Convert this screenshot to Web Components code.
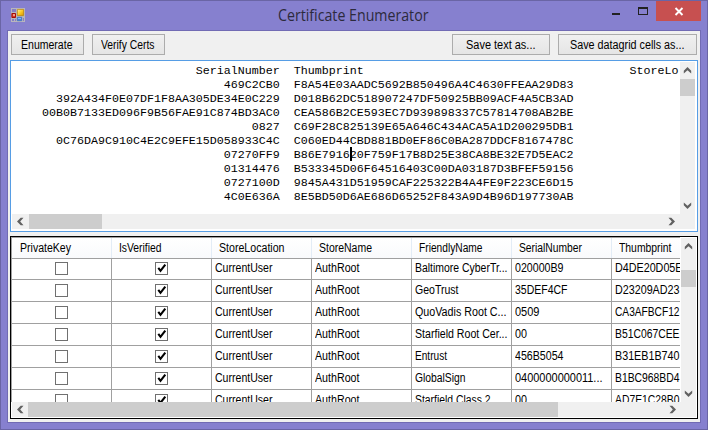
<!DOCTYPE html>
<html lang="en">
<head>
<meta charset="utf-8">
<title>Certificate Enumerator</title>
<style>
html,body{margin:0;padding:0;overflow:hidden}
body{width:708px;height:430px;font-family:"Liberation Sans",Arial,sans-serif;font-size:12px;color:#000}
</style>
</head>
<body>
<app-window></app-window>
<script>
const define = (name, html, setup) => customElements.define(name, class extends HTMLElement {
  connectedCallback() {
    if (this.shadowRoot) return;
    const root = this.attachShadow({mode: 'open'});
    root.innerHTML = typeof html === 'function' ? html(this) : html;
    if (setup) setup(this, root);
  }
});

/* Text condensed horizontally to the width given by the w attribute. */
define('fit-text', el => `<style>
:host{display:block;width:${el.getAttribute('w')}px;white-space:pre;flex:none}
span{display:inline-block;transform-origin:0 50%}
</style><span>${el.getAttribute('text')}</span>`, (el, root) => {
  const s = root.querySelector('span');
  const n = s.getBoundingClientRect().width;
  if (n) s.style.transform = `scaleX(${(+el.getAttribute('w') + .5) / n})`;
});

define('push-button', `<style>
:host{display:flex;align-items:center;justify-content:center;box-sizing:border-box;height:21px;border:1px solid #acacac;
background:linear-gradient(#f0f0f0,#e5e5e5);line-height:19px;padding:1px 2px 0 0}
</style><slot></slot>`);

define('scroll-bar', el => {
  const v = el.hasAttribute('vertical');
  const chev = d => `<svg width="9" height="9" viewBox="0 0 9 9"><path d="${d}" fill="#606060"/></svg>`;
  const a = v ? 'M4.5 1L8.2 4.7V7.5L4.5 4.2L.8 7.5V4.7Z' : 'M1 4.5L4.7 .8H7.5L4.2 4.5L7.5 8.2H4.7Z';
  const b = v ? 'M4.5 8L8.2 4.3V1.5L4.5 4.8L.8 1.5V4.3Z' : 'M8 4.5L4.3 .8H1.5L4.8 4.5L1.5 8.2H4.3Z';
  return `<style>
:host{display:grid;background:#f0f0f0;grid-template-${v ? 'rows' : 'columns'}:${el.getAttribute('tracks')};overflow:hidden}
i{background:#cdcdcd}div{display:flex;align-items:center;justify-content:center}svg{display:block}
.z{grid-${v ? 'row' : 'column'}:5}.t{grid-${v ? 'row' : 'column'}:3}
</style><div>${chev(a)}</div><i class="t"></i><div class="z">${chev(b)}</div>`;
});

define('check-box', el => `<style>
:host{display:block;box-sizing:border-box;width:13px;height:13px;border:1px solid #707070;background:#fff}svg{display:block}
</style>${el.hasAttribute('checked') ? '<svg width="11" height="11" viewBox="0 0 11 11"><path d="M2.3 4.9L4.5 7.8L9.3 1.7" fill="none" stroke="#000" stroke-width="2.1"/></svg>' : ''}`);

define('title-bar', `<style>
:host{display:grid;grid-template-columns:24px 1fr 87px 6px;height:29px;align-items:start}
.icon{margin:7px 0 0 10px;display:block}
.title{display:flex;justify-content:center;padding-left:66px;font:16px/29px "Open Sans","Noto Sans",sans-serif;color:#2c2a3c}
.ctl{display:block}
</style>
<svg class="icon" width="14" height="14" viewBox="0 0 14 14">
<defs><linearGradient id="y" x2="1" y2="1"><stop stop-color="#fff3a0"/><stop offset=".5" stop-color="#fbc926"/><stop offset="1" stop-color="#d79500"/></linearGradient></defs>
<path fill="#b8b6bd" d="M0 0H14V14H0Z"/><path fill="#8580c4" d="M1 1H5V4H1ZM1 11H3V13H1ZM4 11H5V13H4ZM12 10H13V13H12Z"/>
<path fill="url(#y)" stroke="#b98300" stroke-width=".7" d="M6.4 1.4H12.6V7.6H6.4Z"/>
<path fill="#d43d2c" stroke="#a40c08" d="M.9 5.5H4.5V9.5H.9Z"/><path fill="#f09a86" d="M2 6H4V8H2Z"/>
<path fill="#4a86dc" stroke="#2f66b8" stroke-width=".6" d="M6.3 9.3H10.7V12.7H6.3Z"/><path fill="#8ab8f4" d="M7 10H10V11H7Z"/></svg>
<div class="title"><fit-text w="150" text="Certificate Enumerator"></fit-text></div>
<svg class="ctl" width="90" height="20" viewBox="611 1 90 20" style="justify-self:end">
<path fill="#222" d="M612 13H620V15H612Z"/><path fill="#222" fill-rule="evenodd" d="M638 7H648V15H638ZM639 9V14H647V9Z"/>
<path fill="#c75050" d="M656 1H701V21H656Z"/><path d="M675.5 8L682.5 15M682.5 8L675.5 15" stroke="#fff" stroke-width="1.9"/></svg>`);

define('tool-bar', `<style>
:host{display:flex;gap:8px;padding:3px 3px 5px}.gap{flex:1}
</style>
<push-button style="width:73px"><fit-text w="51" text="Enumerate"></fit-text></push-button>
<push-button style="width:73px"><fit-text w="53" text="Verify Certs"></fit-text></push-button>
<div class="gap"></div>
<push-button style="width:98px"><fit-text w="69" text="Save text as..."></fit-text></push-button>
<push-button style="width:139px"><fit-text w="114" text="Save datagrid cells as..."></fit-text></push-button>`);

const dump = [
['SerialNumber','Thumbprint'.padEnd(48)+'StoreLo'],
['469C2CB0','F8A54E03AADC5692B850496A4C4630FFEAA29D83'],
['392A434F0E07DF1F8AA305DE34E0C229','D018B62DC518907247DF50925BB09ACF4A5CB3AD'],
['00B0B7133ED096F9B56FAE91C874BD3AC0','CEA586B2CE593EC7D939898337C57814708AB2BE'],
['0827','C69F28C825139E65A646C434ACA5A1D200295DB1'],
['0C76DA9C910C4E2C9EFE15D058933C4C','C060ED44CBD881BD0EF86C0BA287DDCF8167478C'],
['07270FF9','B86E791620F759F17B8D25E38CA8BE32E7D5EAC2'],
['01314476','B533345D06F64516403C00DA03187D3BFEF59156'],
['0727100D','9845A431D51959CAF225322B4A4FE9F223CE6D15'],
['4C0E636A','8E5BD50D6AE686D65252F843A9D4B96D197730AB']
].map(([a, b]) => a.padStart(38) + '  ' + b).join('\n');

define('text-box', `<style>
:host{display:grid;box-sizing:border-box;height:172px;margin:0 2px;border:1px solid #569de5;padding:1px 2px 2px 1px;background:#fff;
grid-template:152px 1fr/1fr 15px}
.view{position:relative;overflow:hidden;padding:2px 0 0 2px}
pre{margin:0;font:11.667px/14px "Liberation Mono","Courier New",monospace}
.caret{position:absolute;left:338px;top:85px;width:2px;height:14px;background:#000}
.h{height:15px}.corner{background:#f0f0f0}
</style><div class="view"><pre>${dump}</pre><div class="caret"></div></div>
<scroll-bar vertical tracks="17px 0 17px 1fr 17px"></scroll-bar>
<scroll-bar class="h" tracks="17px 0 73px 1fr 17px"></scroll-bar><div class="corner"></div>`);

const heads = [['PrivateKey',50.5],['IsVerified',42],['StoreLocation',65],['StoreName',52.5],['FriendlyName',63],['SerialNumber',62.5],['Thumbprint',52]];
const rows = [
[['Baltimore CyberTr...',92],['020000B9',48],['D4DE20D05E',67]],
[['GeoTrust',43],['35DEF4CF',52],['D23209AD23',64]],
[['QuoVadis Root C...',91],['0509',24],['CA3AFBCF12',64]],
[['Starfield Root Cer...',92],['00',11.5],['B51C067CEE',64]],
[['Entrust',31.5],['456B5054',48],['B31EB1B740',64]],
[['GlobalSign',50],['0400000000011...',87],['B1BC968BD4',64]],
[['Starfield Class 2',75],['00',11.5],['AD7E1C28B0',64]]];
const ft = ([t, w]) => `<fit-text w="${w}" text="${t}"></fit-text>`;

define('data-grid', `<style>
:host{display:grid;box-sizing:border-box;height:183px;margin:4px 2px 0;border:1px solid #000;background:#fff;grid-template:165px 15px/670px 15px}
.view{box-sizing:border-box;overflow:hidden;border-left:1px solid #a0a0a0;border-top:1px solid #a0a0a0;width:669px;height:165px}
.row{display:grid;grid-template-columns:repeat(7,100px);height:22px;line-height:21px}
.row>div{box-sizing:border-box;border-right:1px solid #a0a0a0;border-bottom:1px solid #a0a0a0;padding-left:3px;display:flex;min-width:0}
.row .c{justify-content:center;padding:4px 0 0}
.head{height:20px;line-height:20px}
.head>div{background:linear-gradient(#fff,#f9fafc);border-right-color:#e3ecf6;padding-left:7px}
.head>div:first-child{padding-left:8px}
.h{margin-left:1px;width:669px}.corner{background:#f0f0f0}
.v{margin-top:1px}
</style>
<div class="view"><div class="row head">${heads.map(h => `<div>${ft(h)}</div>`).join('')}</div>
${rows.map(r => `<div class="row"><div class="c"><check-box></check-box></div><div class="c"><check-box checked></check-box></div>${[['CurrentUser',57],['AuthRoot',44], ...r].map(c => `<div>${ft(c)}</div>`).join('')}</div>`).join('')}</div>
<scroll-bar class="v" vertical tracks="17px 15px 17px 1fr 17px"></scroll-bar>
<scroll-bar class="h" tracks="16px 0 530px 1fr 17px"></scroll-bar><div class="corner"></div>`);

define('app-window', `<style>
:host{display:block;box-sizing:border-box;width:708px;height:430px;border:1px solid #6a65a5;background:#8680cf}
.client{margin:0 6px;box-sizing:border-box;height:393px;border:1px solid #716bb4;background:#f0f0f0}
</style><title-bar></title-bar><div class="client"><tool-bar></tool-bar><text-box></text-box><data-grid></data-grid></div>`);
</script>
</body>
</html>
